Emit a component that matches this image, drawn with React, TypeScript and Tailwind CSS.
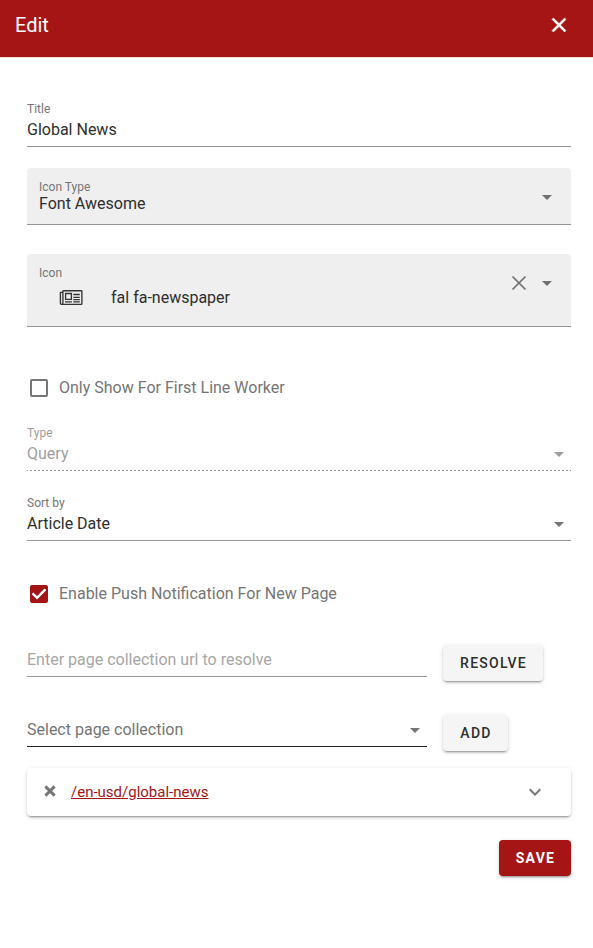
import React from "react";

const Caret = ({ className = "" }: { className?: string }) => (
  <svg viewBox="0 0 24 24" className={`h-6 w-6 shrink-0 fill-current ${className}`}>
    <path d="M7,10L12,15L17,10H7Z" />
  </svg>
);

const Cross = ({ className = "" }: { className?: string }) => (
  <svg viewBox="0 0 24 24" className={`shrink-0 fill-current ${className}`}>
    <path d="M19,6.41L17.59,5L12,10.59L6.41,5L5,6.41L10.59,12L5,17.59L6.41,19L12,13.41L17.59,19L19,17.59L13.41,12L19,6.41Z" />
  </svg>
);

const ThinCross = () => (
  <svg viewBox="0 0 24 24" className="h-6 w-6 shrink-0" fill="none" stroke="currentColor" strokeWidth="1.75">
    <path d="M5.5 5.5L18.5 18.5M18.5 5.5L5.5 18.5" />
  </svg>
);

const BoldCross = () => (
  <svg viewBox="0 0 12 12" className="h-3 w-3 shrink-0" fill="none" stroke="#757575" strokeWidth="2.9">
    <path d="M1.4 1.4L10.6 10.6M10.6 1.4L1.4 10.6" />
  </svg>
);

const Newspaper = () => (
  <svg viewBox="0 0 24 16" className="h-4 w-6 shrink-0" fill="none" stroke="#333" strokeWidth="1.35">
    <path d="M4.5 .7H22.3Q22.9 .7 22.9 1.3V13.8Q22.9 14.4 22.3 14.4H3C1.9 14.4 1.4 13.8 1.4 12.8V2.4H3.9M4.5 .7Q3.9 .7 3.9 1.3V12.8C3.9 13.8 3.5 14.4 2.8 14.4" />
    <path d="M6.6 3.5H12.4V9.4H6.6ZM14.3 4.5H20.8M14.3 7.3H20.8M14.3 9.6H20.8M6 11.9H12.9M14.3 11.9H20.8" />
  </svg>
);

type FieldProps = { label: string; value: string; caret?: boolean; disabled?: boolean };

function Field({ label, value, caret, disabled }: FieldProps) {
  return (
    <div className={disabled ? "text-[#9e9e9e]" : "text-[#2e2e2e]"}>
      <div className="flex h-[49px] items-end">
        <div className="flex-1">
          <div className={`text-xs leading-5 ${disabled ? "" : "text-[#757575]"}`}>{label}</div>
          <div className="h-[27px] leading-[21px]">{value}</div>
        </div>
        {caret && <Caret className={disabled ? "mb-1" : "mb-1 text-[#757575]"} />}
      </div>
      <div
        className={`h-px ${
          disabled
            ? "bg-[repeating-linear-gradient(to_right,#949494_0px,#949494_1px,transparent_1px,transparent_3px,#949494_3px,#949494_4px)]"
            : "bg-[#949494]"
        }`}
      />
    </div>
  );
}

function Checkbox({ label, checked }: { label: string; checked?: boolean }) {
  return (
    <div className="flex h-6 items-center gap-2 text-[#757575]">
      <svg viewBox="0 0 24 24" className={`h-6 w-6 fill-current ${checked ? "text-[#a31515]" : ""}`}>
        {checked ? (
          <path d="M10,17L5,12L6.41,10.58L10,14.17L17.59,6.58L19,8M19,3H5C3.89,3 3,3.89 3,5V19A2,2 0 0,0 5,21H19A2,2 0 0,0 21,19V5C21,3.89 20.1,3 19,3Z" />
        ) : (
          <path d="M19,3H5C3.89,3 3,3.89 3,5V19A2,2 0 0,0 5,21H19A2,2 0 0,0 21,19V5C21,3.89 20.1,3 19,3M19,5V19H5V5H19Z" />
        )}
        {checked && <path d="M5.6 11.6L10 16L18.4 7.4" fill="none" stroke="#fff" strokeWidth="2.1" />}
      </svg>
      <span>{label}</span>
    </div>
  );
}

const raised = "shadow-[0_3px_1px_-2px_rgba(0,0,0,0.2),0_2px_2px_0_rgba(0,0,0,0.14),0_1px_5px_0_rgba(0,0,0,0.12)]";

export default function App() {
  return (
    <div className="h-[948px] w-[593px] bg-white font-['Roboto',sans-serif] text-base text-[#2e2e2e]">
      <header className="flex h-[58px] items-center justify-between border-b border-[#f3dede] bg-[#a51515] pr-[22px] pb-[7px] pl-[15px] text-white">
        <h1 className="text-xl">Edit</h1>
        <Cross className="h-6 w-6 stroke-current stroke-[0.6]" />
      </header>

      <main className="flex flex-col px-[27px] pr-[22px] pt-[39px]">
        <Field label="Title" value="Global News" />

        <div className="mt-[21px] flex h-[57px] items-center justify-between rounded-t border-b border-[#949494] bg-[#efefef] px-3">
          <div>
            <div className="text-xs leading-4 text-[#757575]">Icon Type</div>
            <div className="leading-[18px]">Font Awesome</div>
          </div>
          <Caret className="mt-0.5 text-[#707070]" />
        </div>

        <div className="mt-[29px] flex h-[73px] rounded-t border-b border-[#949494] bg-[#efefef] px-3 pt-[11px]">
          <div className="flex-1">
            <div className="text-xs leading-4 text-[#757575]">Icon</div>
            <div className="flex items-center gap-7 pl-5 leading-[33px]">
              <Newspaper />
              <span>fal fa-newspaper</span>
            </div>
          </div>
          <div className="mt-1.5 flex h-6 items-center gap-1 text-[#707070]">
            <ThinCross />
            <Caret />
          </div>
        </div>

        <div className="mt-[49px]">
          <Checkbox label="Only Show For First Line Worker" />
        </div>

        <div className="mt-[21px]">
          <Field label="Type" value="Query" caret disabled />
        </div>
        <div className="mt-5">
          <Field label="Sort by" value="Article Date" caret />
        </div>

        <div className="mt-[41px]">
          <Checkbox label="Enable Push Notification For New Page" checked />
        </div>

        <div className="mt-[39px] flex gap-4">
          <div className="h-8 w-[400px] border-b border-[#949494] leading-[29px] text-[#a6a6a6]">
            Enter page collection url to resolve
          </div>
          <button className={`h-9 w-[100px] rounded bg-[#f5f5f5] pl-px text-sm font-medium tracking-[1.25px] ${raised}`}>
            RESOLVE
          </button>
        </div>

        <div className="mt-[34px] flex gap-4">
          <div className="flex h-8 w-[400px] justify-between border-b border-[#212121] leading-[29px] text-[#757575]">
            <span>Select page collection</span>
            <Caret className="mt-[3px]" />
          </div>
          <button className={`h-9 w-[65px] rounded bg-[#f5f5f5] pl-px text-sm font-medium tracking-[1.25px] ${raised}`}>
            ADD
          </button>
        </div>

        <div className={`mt-[17px] flex h-12 items-center rounded pl-[17px] pr-6 text-[15px] ${raised}`}>
          <div className="pb-0.5">
            <BoldCross />
          </div>
          <a className="ml-[15px] flex-1 text-[#a51515] underline">/en-usd/global-news</a>
          <svg viewBox="0 0 24 24" className="mb-px h-6 w-6 fill-[#757575]">
            <path d="M7.41,8.58L12,13.17L16.59,8.58L18,10L12,16L6,10L7.41,8.58Z" />
          </svg>
        </div>

        <button
          className={`mt-6 h-9 w-[72px] self-end rounded bg-[#a51515] pl-px text-sm font-bold tracking-[1.25px] text-white ${raised}`}
        >
          SAVE
        </button>
      </main>
    </div>
  );
}
